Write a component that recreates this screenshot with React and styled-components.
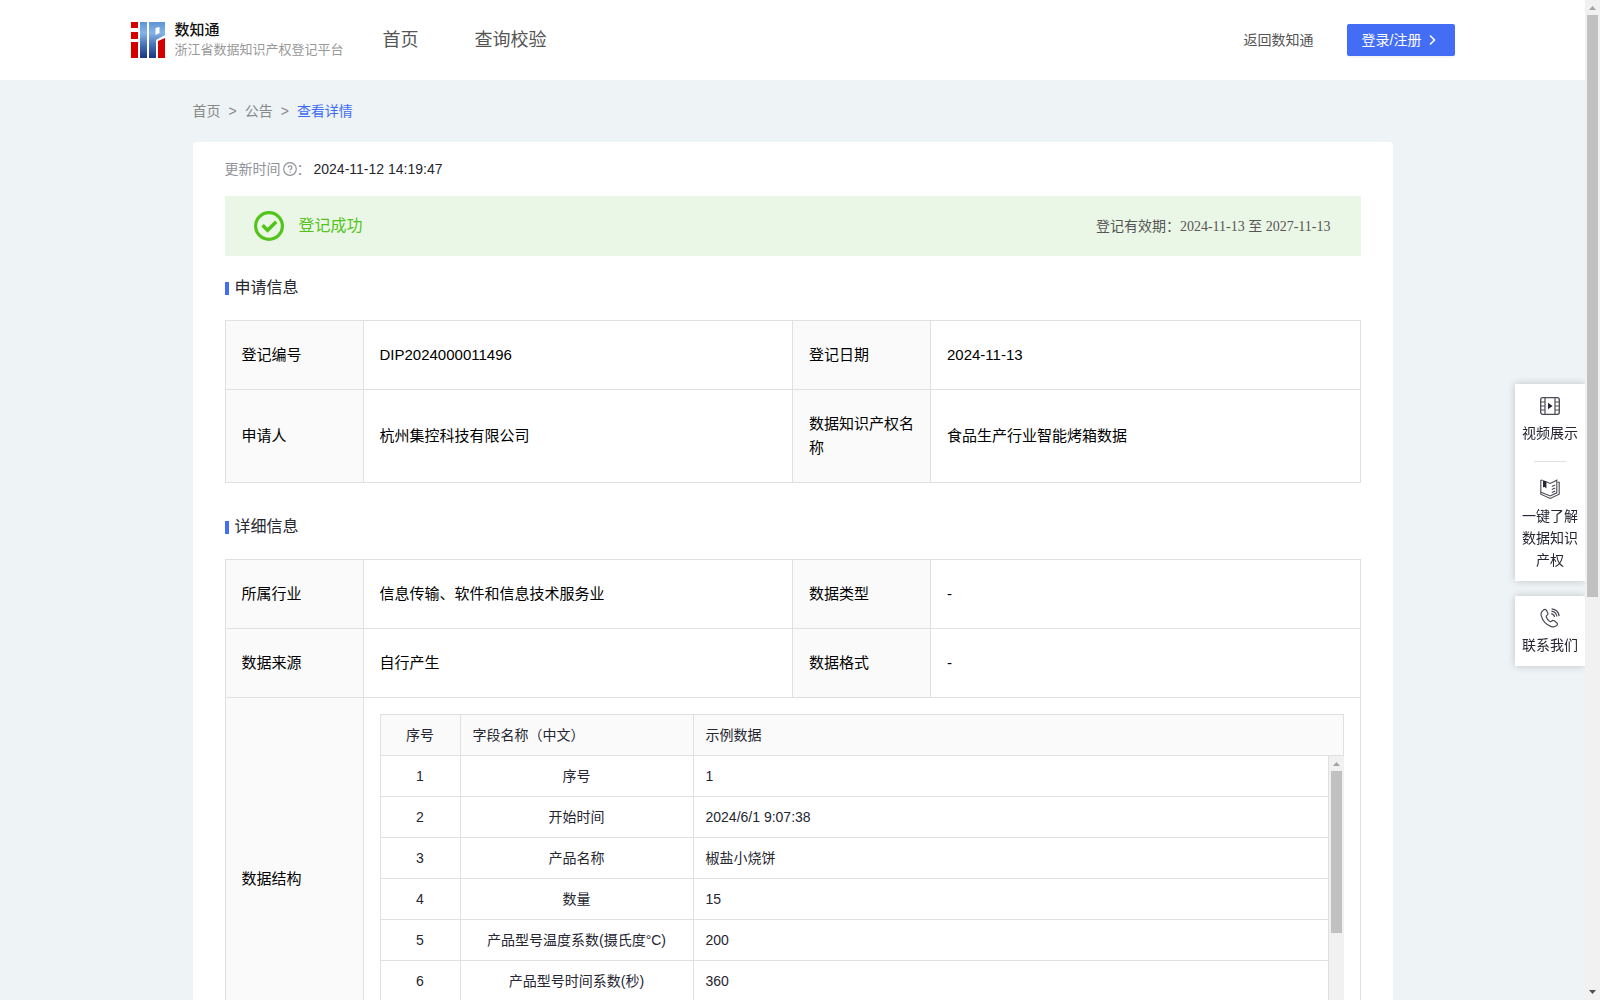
import React from "react";
import styled, { createGlobalStyle } from "styled-components";

const fields = [
	["序号", "1"],
	["开始时间", "2024/6/1 9:07:38"],
	["产品名称", "椒盐小烧饼"],
	["数量", "15"],
	["产品型号温度系数(摄氏度°C)", "200"],
	["产品型号时间系数(秒)", "360"],
];

const Logo = () => (
	<svg width="34" height="36" viewBox="0 0 34 36" aria-hidden="true">
		<defs>
			<linearGradient id="logoBlue" x1="0" y1="0" x2="0" y2="36" gradientUnits="userSpaceOnUse">
				<stop offset="0" stopColor="#5c94d6" />
				<stop offset="0.3" stopColor="#86b4e6" />
				<stop offset="0.65" stopColor="#4470b4" />
				<stop offset="1" stopColor="#1d3480" />
			</linearGradient>
		</defs>
		<path fill="#d40000" d="M0 0h7v6H0zM0 10h7v7H0zM0 20h7v16H0zM27 19l7-3v20h-7z" />
		<path fill="url(#logoBlue)" d="M9 0h7v36H9z" />
		<path
			fill="url(#logoBlue)"
			fillRule="evenodd"
			d="M18 0h16v13l-9 5v18h-7zM24.500 6v7l4-2V5z"
		/>
	</svg>
);

const QuestionIcon = () => (
	<svg width="14" height="14" viewBox="0 0 14 14" fill="none" stroke="#909399">
		<circle cx="7" cy="7" r="6.3" strokeWidth="1.2" />
		<path d="M5.2 5.6c0-2.4 3.7-2.3 3.7 0 0 1.3-1.8 1.3-1.8 2.6M7.1 9.5v1.2" strokeWidth="1.2" />
	</svg>
);

const SuccessIcon = () => (
	<svg width="30" height="30" viewBox="0 0 30 30" fill="none" stroke="#52c41a">
		<circle cx="15" cy="15" r="13.4" strokeWidth="3.2" />
		<path d="M8.6 14.2l5 5 8.6-8.4" strokeWidth="3.6" />
	</svg>
);

const VideoIcon = () => (
	<svg width="20" height="20" viewBox="0 0 20 20" fill="none" stroke="#4a4b55">
		<rect x="0.7" y="1.7" width="18.6" height="16.6" rx="2" strokeWidth="1.3" />
		<path d="M5 2v16M15 2v16M1 6h4M1 10h4M1 14h4M15 6h4M15 10h4M15 14h4" strokeWidth="1.2" />
		<path d="M8 6.8l4.6 3.2L8 13.2z" fill="#252631" stroke="none" />
	</svg>
);

const BookIcon = () => (
	<svg width="20" height="20" viewBox="0 0 20 20" fill="none" stroke="#4a4b55" strokeWidth="1.1">
		<path d="M3 1.200H.8v14l9.400 4.200 9-4.200V3.200h-1.700" />
		<path d="M6.200 2.800l4 1.600 6.600-3.200v12.600l-6.600 3.200L1 13.200" />
		<path d="M11.800 7.400l3.400-1.500M11.800 10.400l3.400-1.500M11.800 13.400l3.400-1.500" />
		<path d="M3 1.200l3.400 1v7.200L4.700 8 3 8.300z" fill="#252631" stroke="none" />
	</svg>
);

const PhoneIcon = () => (
	<svg width="20" height="20" viewBox="0 0 20 20" fill="none" stroke="#4a4b55" strokeWidth="1.2">
		<path d="M3.2 2.2C1.2 3.6.6 5.400 1.200 7.600c1.400 5 5 9 9.600 10.800 2.200.9 4.400.7 6-1 .9-.9.9-1.900-.1-2.700l-2.400-1.900c-1-.7-1.800-.6-2.500.2-.8.8-1.500.9-2.400.1-1.400-1.100-2.400-2.400-3-3.900-.4-.9-.2-1.500.6-2 .9-.6 1.200-1.400.7-2.400L6.400 2.400c-.7-1.300-1.900-1.200-3.200-.2z" />
		<path d="M11.200 5.600c1.800.3 3 1.400 3.400 3.300M11.400 3.200c3 .3 5 2.200 5.500 5.300M11.600.9c4.400.4 7 3 7.600 7.200" />
	</svg>
);

const ArrowIcon = () => (
	<svg width="14" height="14" viewBox="0 0 14 14" fill="none" stroke="#fff" strokeWidth="1.6">
		<path d="M4 2.500l4.500 4.500L4 11.500" />
	</svg>
);

const Scrollbar = ({ thumb }) => (
	<Rail aria-hidden="true">
		<svg width="15" height="15" viewBox="0 0 15 15">
			<path d="M4 10l3.500-4L11 10z" fill="#a3a3a3" />
		</svg>
		<Track>
			<Thumb $size={thumb} />
		</Track>
		<svg width="15" height="15" viewBox="0 0 15 15">
			<path d="M4 5l3.500 4L11 5z" fill="#505050" />
		</svg>
	</Rail>
);

const App = () => {
	return (
		<Shell>
			<GlobalStyle />
			<Page>
				<Header>
					<HeaderInner>
						<Brand href="#">
							<Logo />
							<BrandText>
								<strong>数知通</strong>
								<span>浙江省数据知识产权登记平台</span>
							</BrandText>
						</Brand>
						<Nav>
							<a href="#">首页</a>
							<a href="#">查询校验</a>
						</Nav>
						<BackLink href="#">返回数知通</BackLink>
						<LoginButton type="button">
							登录/注册
							<ArrowIcon />
						</LoginButton>
					</HeaderInner>
				</Header>
				<Main>
					<Breadcrumb>
						<a href="#">首页</a>
						<span>&gt;</span>
						<a href="#">公告</a>
						<span>&gt;</span>
						<Current href="#">查看详情</Current>
					</Breadcrumb>
					<Card>
						<UpdateTime>
							<span>更新时间</span>
							<QuestionIcon />
							<span>：</span>
							<time>2024-11-12 14:19:47</time>
						</UpdateTime>
						<Banner>
							<SuccessIcon />
							<Status>登记成功</Status>
							<Validity>
								登记有效期：
								<span>2024-11-13 至 2027-11-13</span>
							</Validity>
						</Banner>
						<SectionTitle>申请信息</SectionTitle>
						<InfoTable>
							<InfoCols />
							<tbody>
								<tr>
									<th>登记编号</th>
									<td>DIP2024000011496</td>
									<th>登记日期</th>
									<td>2024-11-13</td>
								</tr>
								<tr>
									<th>申请人</th>
									<td>杭州集控科技有限公司</td>
									<th>数据知识产权名称</th>
									<td>食品生产行业智能烤箱数据</td>
								</tr>
							</tbody>
						</InfoTable>
						<SectionTitle $spaced>详细信息</SectionTitle>
						<InfoTable>
							<InfoCols />
							<tbody>
								<tr>
									<th>所属行业</th>
									<td>信息传输、软件和信息技术服务业</td>
									<th>数据类型</th>
									<td>-</td>
								</tr>
								<tr>
									<th>数据来源</th>
									<td>自行产生</td>
									<th>数据格式</th>
									<td>-</td>
								</tr>
								<tr>
									<th>数据结构</th>
									<NestedCell colSpan={3}>
										<FieldTable>
											<FieldCols />
											<thead>
												<tr>
													<th>序号</th>
													<th>字段名称（中文）</th>
													<th>示例数据</th>
												</tr>
											</thead>
										</FieldTable>
										<FieldBody>
											<FieldScroll>
												<FieldTable $body>
													<FieldCols />
													<tbody>
														{fields.map(([name, sample], i) => (
															<tr key={name}>
																<td>{i + 1}</td>
																<td>{name}</td>
																<td>{sample}</td>
															</tr>
														))}
													</tbody>
												</FieldTable>
											</FieldScroll>
											<Scrollbar thumb={63} />
										</FieldBody>
									</NestedCell>
								</tr>
							</tbody>
						</InfoTable>
					</Card>
				</Main>
				<FloatBar>
					<FloatBox>
						<FloatItem type="button">
							<VideoIcon />
							视频展示
						</FloatItem>
						<Divider />
						<FloatItem type="button">
							<BookIcon />
							一键了解数据知识产权
						</FloatItem>
					</FloatBox>
					<FloatBox>
						<FloatItem type="button">
							<PhoneIcon />
							联系我们
						</FloatItem>
					</FloatBox>
				</FloatBar>
			</Page>
			<Scrollbar thumb={60} />
		</Shell>
	);
};

export default App;

const InfoCols = () => (
	<colgroup>
		<col width="138" />
		<col />
		<col width="138" />
		<col />
	</colgroup>
);

const FieldCols = () => (
	<colgroup>
		<col width="80" />
		<col width="233" />
		<col />
	</colgroup>
);

const GlobalStyle = createGlobalStyle`
	* {
		box-sizing: border-box;
	}
	body {
		margin: 0;
		background: #eef3f6;
		color: #252631;
		font: 14px/22px "Liberation Sans", "Noto Sans CJK SC", sans-serif;
	}
	a {
		color: inherit;
		text-decoration: none;
	}
	button {
		font: inherit;
		border: none;
		cursor: pointer;
	}
	svg {
		flex: none;
	}
`;

const Shell = styled.div`
	display: flex;
	height: 100vh;
`;

const Page = styled.div`
	flex: 1;
	min-width: 0;
	overflow-y: auto;
	scrollbar-width: none;
`;

const Rail = styled.div`
	display: flex;
	flex-direction: column;
	flex: none;
	width: 15px;
	background: #f1f1f1;
`;

const Track = styled.div`
	flex: 1;
	padding: 0 2px;
`;

const Thumb = styled.div`
	height: ${(props) => props.$size}%;
	background: #c1c1c1;
`;

const Header = styled.header`
	background: #fff;
`;

const HeaderInner = styled.div`
	display: flex;
	align-items: center;
	max-width: 1324px;
	height: 80px;
	margin: 0 auto;
`;

const Brand = styled.a`
	display: flex;
	align-items: center;
	gap: 10px;
	width: 252px;
`;

const BrandText = styled.span`
	display: flex;
	flex-direction: column;
	white-space: nowrap;
	strong {
		font-size: 15px;
		font-weight: 500;
		line-height: 20px;
		color: #111;
	}
	span {
		font-size: 13px;
		line-height: 20px;
		color: #999;
	}
`;

const Nav = styled.nav`
	display: flex;
	gap: 56px;
	margin-right: auto;
	font-size: 18px;
	color: #555;
`;

const BackLink = styled.a`
	margin-right: 33px;
	color: #555;
`;

const LoginButton = styled.button`
	display: flex;
	align-items: center;
	gap: 4px;
	height: 32px;
	padding: 0 15px;
	border-radius: 2px;
	background: #446df6;
	color: #fff;
	box-shadow: 0 2px 0 rgba(0, 0, 0, 0.04);
`;

const Main = styled.main`
	max-width: 1200px;
	margin: 0 auto;
	padding-bottom: 48px;
`;

const Breadcrumb = styled.nav`
	display: flex;
	gap: 8px;
	padding: 20px 0;
	color: #888;
`;

const Current = styled.a`
	color: #3f6cf5;
`;

const Card = styled.section`
	padding: 16px 32px 32px;
	border-radius: 4px;
	background: #fff;
`;

const UpdateTime = styled.div`
	display: flex;
	align-items: center;
	color: #909399;
	svg {
		margin-left: 2px;
	}
	time {
		margin-left: 3px;
		color: #252631;
	}
`;

const Banner = styled.div`
	display: flex;
	align-items: center;
	height: 60px;
	margin: 16px 0 20px;
	padding: 0 30px 0 29px;
	background: #ebf7e6;
`;

const Status = styled.span`
	margin-left: 15px;
	font-size: 16px;
	color: #52c41a;
`;

const Validity = styled.span`
	margin-left: auto;
	color: #555;
	span {
		font-family: "Liberation Serif", "Noto Sans CJK SC", serif;
	}
`;

const SectionTitle = styled.h2`
	display: flex;
	align-items: center;
	gap: 6px;
	margin: ${(props) => (props.$spaced ? "32px" : "0")} 0 20px;
	font-size: 16px;
	font-weight: 400;
	line-height: 24px;
	&:before {
		content: "";
		width: 4px;
		height: 13px;
		background: #446df6;
	}
`;

const InfoTable = styled.table`
	width: 100%;
	table-layout: fixed;
	border-collapse: collapse;
	font-size: 15px;
	line-height: 24px;
	color: #000;
	th,
	td {
		padding: 22px 12px 22px 16px;
		border: 1px solid #e0e0e0;
		font-weight: 400;
		text-align: left;
	}
	th {
		background: #fafafa;
	}
`;

const NestedCell = styled.td`
	&&& {
		padding: 16px;
	}
`;

const FieldTable = styled.table`
	width: 100%;
	table-layout: fixed;
	border-collapse: collapse;
	margin-top: ${(props) => (props.$body ? "-1px" : "0")};
	font-size: 14px;
	line-height: 20px;
	color: #252631;
	&& th,
	&& td {
		padding: 10px 12px;
	}
	th:first-child,
	td:first-child,
	td:nth-child(2) {
		text-align: center;
	}
`;

const FieldBody = styled.div`
	display: flex;
	height: 287px;
`;

const FieldScroll = styled.div`
	flex: 1;
	overflow-y: auto;
	scrollbar-width: none;
`;

const FloatBar = styled.aside`
	position: fixed;
	top: 384px;
	right: 15px;
	display: flex;
	flex-direction: column;
	gap: 15px;
	width: 70px;
	clip-path: inset(-12px 0 -12px -12px);
`;

const FloatBox = styled.div`
	display: flex;
	flex-direction: column;
	align-items: center;
	padding: 12px 0 10px;
	background: #fff;
	box-shadow: 0 0 8px rgba(0, 0, 0, 0.2);
`;

const FloatItem = styled.button`
	display: flex;
	flex-direction: column;
	align-items: center;
	gap: 6px;
	padding: 0 7px;
	background: none;
	color: #252631;
`;

const Divider = styled.hr`
	width: 32px;
	height: 1px;
	margin: 17px 0;
	border: none;
	background: #e0e0e0;
`;
